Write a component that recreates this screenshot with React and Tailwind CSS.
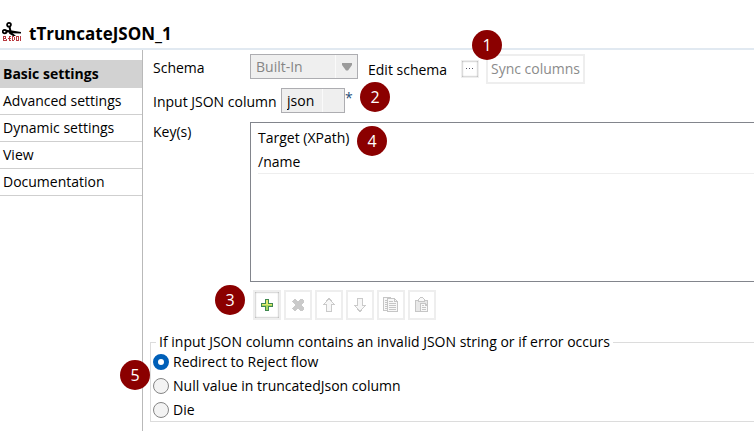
import React from "react";

const navItems = ["Advanced settings", "Dynamic settings", "View", "Documentation"];

function Badge({ children, className }) {
  return (
    <span
      className={`absolute z-10 flex size-[30px] items-center justify-center rounded-full bg-[#8b0000] text-base text-white ${className}`}
    >
      {children}
    </span>
  );
}

function ComponentIcon() {
  return (
    <svg className="h-5 w-5 shrink-0" viewBox="0 0 20 20" fill="none" aria-hidden="true">
      <circle cx="7" cy="2.8" r="1.9" stroke="#000" strokeWidth="1.8" />
      <ellipse cx="2.7" cy="9.6" rx="2" ry="1.7" stroke="#000" strokeWidth="1.8" />
      <path d="M7.5 4.5L9 12" stroke="#000" strokeWidth="2" />
      <path d="M1 7.4L10 8.4L19 10V11.5L9 11.2L4 9.8Z" fill="#000" />
      <path d="M8 9L14 14H11L7 11.5Z" fill="#000" />
      <g stroke="#b83a40" strokeWidth="1">
        <path d="M1.5 14V19M3.5 14V16M4.5 17V19M7.5 14V19M10.5 14V19M12.5 15V18M14.5 14V19M16.5 14V19M18.5 14V19" />
        <path d="M1 14.5H4M7 14.5H9M10 14.5H12M14 14.5H16M2 16.5H4M6 16.5H9M1 18.5H4M7 18.5H9M10 18.5H12M14 18.5H16" />
      </g>
    </svg>
  );
}

function Combo({ id, value, disabled, className, buttonClass, arrow }) {
  return (
    <div className={`relative h-[25px] ${className}`}>
      <select
        id={id}
        disabled={disabled}
        className="block h-full w-full appearance-none border border-[#adadb1] bg-[#efefef] pl-[5px] text-sm leading-5 opacity-100 disabled:text-[#858585]"
      >
        <option>{value}</option>
      </select>
      <span
        className={`pointer-events-none absolute inset-y-px right-px flex items-center justify-center border-l border-[#fafafa] ${buttonClass}`}
      >
        {arrow && (
          <svg width="10" height="8" viewBox="0 0 10 8" aria-hidden="true">
            <path d="M0 0H10V2L6 7.5H4L0 2Z" fill="#9b9b9b" />
          </svg>
        )}
      </span>
    </div>
  );
}

const tools = [
  {
    label: "Add",
    icon: (
      <>
        <path d="M6.5 2.5H9.5V6.5H13.5V9.5H9.5V13.5H6.5V9.5H2.5V6.5H6.5Z" fill="#a9d65c" stroke="#3f8850" />
        <path d="M7 3H9V7H13V8H3V7H7Z" fill="#dfe86c" />
      </>
    ),
  },
  {
    label: "Remove",
    icon: <path d="M2 4L4 2H6L8 5L10 2H12L14 4V5L11 8L14 11V12L12 14H10L8 11L6 14H4L2 12V11L5 8L2 5Z" fill="#cacaca" />,
  },
  {
    label: "Move up",
    icon: <path d="M8 1.5L13.5 7.5H10.5V14.5H5.5V7.5H2.5Z" fill="#f7f7f7" stroke="#cacaca" />,
  },
  {
    label: "Move down",
    icon: <path d="M5.5 1.5H10.5V8.5H13.5L8 14.5L2.5 8.5H5.5Z" fill="#f7f7f7" stroke="#cacaca" />,
  },
  {
    label: "Copy",
    icon: (
      <g stroke="#c6c6c6">
        <path d="M0.5 0.5H7.5L9.5 2.5V13.5H0.5Z" fill="#f8f8f8" />
        <path d="M2 3.5H4M2 5.5H4M2 7.5H4M2 9.5H4M2 11.5H4" />
        <path d="M4.5 1.5H11.5L14.5 4.5V14.5H4.5Z" fill="#f8f8f8" />
        <path d="M11.5 1.5V4.5H14.5M6 4.5H10M6 6.5H13M6 8.5H13M6 10.5H13M6 12.5H13" />
      </g>
    ),
  },
  {
    label: "Paste",
    icon: (
      <g stroke="#c6c6c6">
        <path d="M1.5 3.5H13.5V14.5H1.5Z" fill="#e8e8e8" />
        <path d="M4.5 4.5V2.5L6.5 0.5H8.5L10.5 2.5V4.5Z" fill="#f8f8f8" />
        <path d="M6.5 6.5H11.5L13.5 8.5V14.5H6.5Z" fill="#f8f8f8" />
        <path d="M11.5 6.5V8.5H13.5M8 8.5H10M8 10.5H12M8 12.5H12" />
      </g>
    ),
  },
];

function Tool({ label, icon, disabled }) {
  return (
    <button
      type="button"
      aria-label={label}
      disabled={disabled}
      className="flex h-[30px] w-7 items-center justify-center border-2 border-[#eeeeee] bg-white enabled:shadow-[inset_0_0_2px_#777777]"
    >
      <svg width="16" height="16" viewBox="0 0 16 16" fill="none" shapeRendering="crispEdges" aria-hidden="true">
        {icon}
      </svg>
    </button>
  );
}

function Radio({ label, checked }) {
  return (
    <label className="flex h-6 items-center gap-1">
      <input
        type="radio"
        name="on-error"
        defaultChecked={checked}
        className="size-4 appearance-none rounded-full border border-[#858585] bg-[#f3f3f3] checked:border-[5px] checked:border-[#005fb8] checked:bg-white"
      />
      {label}
    </label>
  );
}

export default function App() {
  return (
    <div className="flex min-h-screen flex-col overflow-hidden bg-white font-['Open_Sans','Noto_Sans',sans-serif] text-sm leading-5 text-black">
      <header className="flex h-[50px] items-end gap-[7px] border-b-2 border-[#e1e9f1] pb-0.5 pl-0.5">
        <div className="pb-1">
          <ComponentIcon />
        </div>
        <h1 className="text-[17px] leading-6 font-bold">tTruncateJSON_1</h1>
      </header>

      <div className="flex grow">
        <nav className="w-[143px] shrink-0 border-r border-[#b9b9b9] pt-2.5">
          <a href="#basic" className="flex h-7 items-center bg-[#d2d2d2] pl-[3px] font-bold">
            Basic settings
          </a>
          {navItems.map((item) => (
            <a key={item} href="#section" className="flex h-[27px] items-center border-b border-[#cfcfcf] pl-[3px]">
              {item}
            </a>
          ))}
        </nav>

        <main className="min-w-0 grow pt-1 pl-[7px]">
          <div className="relative flex h-[34px] items-start pl-[3px]">
            <label htmlFor="schema" className="w-[97px] pt-1">
              Schema
            </label>
            <Combo id="schema" value="Built-In" disabled arrow className="w-[108px]" buttonClass="w-[22px]" />
            <span className="w-[103px] pt-1.5 pl-2.5">Edit schema</span>
            <button
              type="button"
              aria-label="Edit schema"
              className="mt-1.5 flex size-[18px] items-center justify-center border border-[#eeeeee] bg-white shadow-[inset_0_0_2px_#777777]"
            >
              <svg width="8" height="2" viewBox="0 0 8 2" shapeRendering="crispEdges" aria-hidden="true">
                <path d="M0 0H1V1H0ZM3 0H4V1H3ZM6 0H7V1H6Z" fill="#555566" />
              </svg>
            </button>
            <button
              type="button"
              disabled
              className="ml-[7px] h-[30px] w-[99px] border-2 border-[#eeeeee] bg-white text-center whitespace-nowrap text-[#8b8b8b]"
            >
              Sync columns
            </button>
            <Badge className="-top-6 left-[322px]">1</Badge>
          </div>

          <div className="relative flex h-[34px] items-start pl-[3px]">
            <label htmlFor="json-column" className="w-32 pt-1 whitespace-nowrap">
              Input JSON column
            </label>
            <Combo id="json-column" value="json" className="w-16" buttonClass="w-[22px]" />
            <span className="text-[#1f4e79]">*</span>
            <Badge className="-top-1.5 left-[210px]">2</Badge>
          </div>

          <div className="relative flex items-start pl-[3px]">
            <span className="w-[97px] shrink-0">Key(s)</span>
            <div className="h-40 min-w-0 grow border-y border-l border-[#82858c] pt-0.5 pl-[7px]">
              <table className="w-full border-separate border-spacing-0 text-left">
                <thead>
                  <tr>
                    <th className="h-[25px] p-0 font-normal">Target (XPath)</th>
                  </tr>
                </thead>
                <tbody>
                  <tr>
                    <td className="h-6 border-b border-[#eeeeee] p-0">/name</td>
                  </tr>
                </tbody>
              </table>
            </div>
            <Badge className="top-1 left-[207px]">4</Badge>
          </div>

          <div className="relative mt-2 flex gap-[3px] pl-[103px]">
            {tools.map((tool, i) => (
              <Tool key={tool.label} {...tool} disabled={i > 0} />
            ))}
            <Badge className="-top-[5px] left-[65px]">3</Badge>
          </div>

          <fieldset className="relative mt-3 border-y border-l border-[#dcdcdc]">
            <legend className="ml-[5px] px-[3px]">If input JSON column contains an invalid JSON string or if error occurs</legend>
            <div className="-mt-0.5 -mb-px pl-0.5">
              <Radio label="Redirect to Reject flow" checked />
              <Radio label="Null value in truncatedJson column" />
              <Radio label="Die" />
            </div>
            <Badge className="top-2 -left-[31px]">5</Badge>
          </fieldset>
        </main>
      </div>
    </div>
  );
}
